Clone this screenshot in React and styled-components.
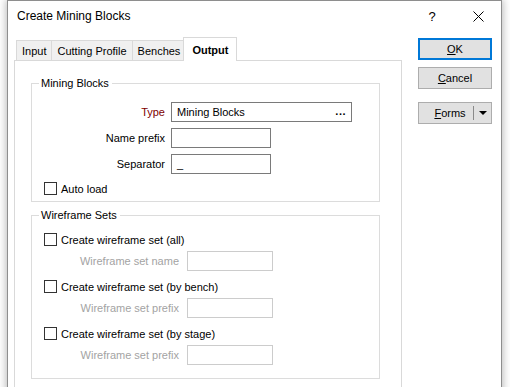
import styled, { createGlobalStyle } from 'styled-components'

const GlobalStyle = createGlobalStyle`
  html, body {
    margin: 0;
    padding: 0;
    background: #ffffff;
    overflow: hidden;
  }
  body {
    font-family: "Liberation Sans", Arial, sans-serif;
    font-size: 11px;
    color: #000;
  }
`

const Page = styled.div`
  width: 510px;
  height: 387px;
  overflow: hidden;
  padding-left: 7px;
  box-sizing: border-box;
`

const Window = styled.div`
  width: 495px;
  height: 420px;
  box-sizing: border-box;
  border: 1px solid #8e8e8e;
  background: #fff;
  box-shadow: 0 0 8px 1px rgba(0, 0, 0, 0.28);
  display: flex;
  flex-direction: column;
`

const TitleBar = styled.div`
  height: 30px;
  display: flex;
  align-items: center;
  padding-left: 9px;
  font-size: 12px;
`

const Title = styled.div`
  flex: 1;
`

const TitleButton = styled.div`
  width: 46px;
  height: 30px;
  display: flex;
  align-items: center;
  justify-content: center;
  font-size: 13px;
`

const Body = styled.div`
  flex: 1;
  display: flex;
  padding: 6px 9px 0 6px;
  gap: 16px;
  min-height: 0;
`

const Left = styled.div`
  width: 388px;
  display: flex;
  flex-direction: column;
`

const TabStrip = styled.div`
  height: 23px;
  display: flex;
  align-items: flex-end;
  padding-left: 2px;
`

const Tab = styled.div`
  position: relative;
  box-sizing: border-box;
  height: ${p => (p.$active ? '24px' : '20px')};
  padding: 0 ${p => (p.$active ? '8px' : '5px')};
  margin: ${p => (p.$active ? '0 -2px -1px -2px' : '0 -1px 0 0')};
  border: 1px solid #d9d9d9;
  border-bottom: none;
  background: ${p => (p.$active ? '#fff' : '#f0f0f0')};
  font-weight: ${p => (p.$active ? 'bold' : 'normal')};
  z-index: ${p => (p.$active ? 1 : 0)};
  display: flex;
  align-items: center;
  white-space: nowrap;
`

const Panel = styled.div`
  flex: 1;
  border: 1px solid #d9d9d9;
  background: #fff;
  padding: 0 21px 0 16px;
`

const Group = styled.fieldset`
  margin: ${p => p.$top}px 0 0 0;
  padding: 0;
  border: 1px solid #dcdcdc;
  min-width: 0;
`

const Legend = styled.legend`
  margin-left: 7px;
  padding: 0 3px 0 2px;
  line-height: 16px;
`

const GroupBody = styled.div`
  padding: ${p => p.$top}px 0 ${p => p.$bottom}px 12px;
`

const FormGrid = styled.div`
  display: grid;
  grid-template-columns: ${p => p.$label}px max-content;
  column-gap: ${p => p.$gap}px;
  row-gap: 6px;
  align-items: center;
`

const Label = styled.div`
  text-align: right;
  white-space: nowrap;
  color: ${p => (p.$required ? '#800000' : p.$disabled ? '#a3a3a3' : '#000')};
`

const Field = styled.div`
  box-sizing: border-box;
  width: ${p => p.$width}px;
  height: 20px;
  border: 1px solid ${p => (p.$disabled ? '#cccccc' : '#7a7a7a')};
  background: #fff;
  display: flex;
  align-items: center;
  justify-content: space-between;
  padding: 0 5px;
`

const Dots = styled.span`
  font-weight: bold;
  letter-spacing: 0.5px;
  margin-top: -3px;
`

const CheckRow = styled.label`
  display: flex;
  align-items: center;
  gap: 4px;
  height: 13px;
  margin-top: ${p => p.$top || 0}px;
  white-space: nowrap;
`

const Box = styled.span`
  width: 13px;
  height: 13px;
  box-sizing: border-box;
  border: 1px solid #333;
  background: #fff;
`

const SubRow = styled(FormGrid)`
  margin-top: ${p => p.$top}px;
`

const Buttons = styled.div`
  width: 74px;
  display: flex;
  flex-direction: column;
  padding-top: 1px;
`

const Button = styled.div`
  box-sizing: border-box;
  height: 22px;
  margin-top: ${p => p.$top || 0}px;
  border: ${p => (p.$focused ? '2px solid #0078d7' : '1px solid #adadad')};
  background: #e1e1e1;
  display: flex;
  align-items: center;
  justify-content: center;
`

const SplitMain = styled.span`
  flex: 1;
  text-align: center;
  padding-left: 8px;
`

const SplitDivider = styled.span`
  width: 1px;
  height: 14px;
  background: #8a8a8a;
`

const SplitArrow = styled.span`
  width: 17px;
  display: flex;
  justify-content: center;
`

const Key = styled.span`
  text-decoration: underline;
`

function CloseIcon() {
  return (
    <svg width="11" height="11" viewBox="0 0 11 11">
      <path d="M0.5 0.5 L10.5 10.5 M10.5 0.5 L0.5 10.5" stroke="#000" strokeWidth="1" />
    </svg>
  )
}

function WireframeOption({ title, label, top }) {
  return (
    <>
      <CheckRow $top={top}><Box />{title}</CheckRow>
      <SubRow $label={135} $gap={8} $top={5}>
        <Label $disabled>{label}</Label>
        <Field $width={86} $disabled />
      </SubRow>
    </>
  )
}

export default function App() {
  return (
    <Page>
      <GlobalStyle />
      <Window>
        <TitleBar>
          <Title>Create Mining Blocks</Title>
          <TitleButton>?</TitleButton>
          <TitleButton><CloseIcon /></TitleButton>
        </TitleBar>
        <Body>
          <Left>
            <TabStrip>
              <Tab>Input</Tab>
              <Tab>Cutting Profile</Tab>
              <Tab>Benches</Tab>
              <Tab $active>Output</Tab>
            </TabStrip>
            <Panel>
              <Group $top={14}>
                <Legend>Mining Blocks</Legend>
                <GroupBody $top={11} $bottom={6}>
                  <FormGrid $label={121} $gap={6}>
                    <Label $required>Type</Label>
                    <Field $width={181}>
                      <span>Mining Blocks</span>
                      <Dots>...</Dots>
                    </Field>
                    <Label>Name prefix</Label>
                    <Field $width={100} />
                    <Label>Separator</Label>
                    <Field $width={100}><span>_</span></Field>
                  </FormGrid>
                  <CheckRow $top={8}><Box />Auto load</CheckRow>
                </GroupBody>
              </Group>
              <Group $top={5}>
                <Legend>Wireframe Sets</Legend>
                <GroupBody $top={10} $bottom={13}>
                  <WireframeOption title="Create wireframe set (all)" label="Wireframe set name" top={0} />
                  <WireframeOption title="Create wireframe set (by bench)" label="Wireframe set prefix" top={9} />
                  <WireframeOption title="Create wireframe set (by stage)" label="Wireframe set prefix" top={9} />
                </GroupBody>
              </Group>
            </Panel>
          </Left>
          <Buttons>
            <Button $focused><Key>O</Key>K</Button>
            <Button $top={7}><Key>C</Key>ancel</Button>
            <Button $top={13}>
              <SplitMain><Key>F</Key>orms</SplitMain>
              <SplitDivider />
              <SplitArrow>
                <svg width="8" height="4" viewBox="0 0 8 4">
                  <path d="M0 0 H8 L4 4 Z" fill="#000" />
                </svg>
              </SplitArrow>
            </Button>
          </Buttons>
        </Body>
      </Window>
    </Page>
  )
}
